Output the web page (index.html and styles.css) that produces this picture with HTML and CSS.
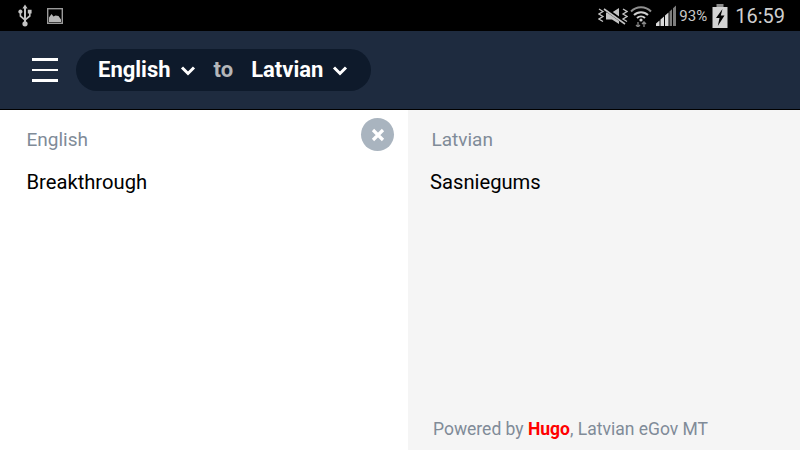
FILE: index.html
```html
<!DOCTYPE html>
<html lang="en">
<head>
    <meta charset="UTF-8">
    <meta name="viewport" content="width=device-width, initial-scale=1.0">
    <title>Hugo translate</title>
    <link rel="stylesheet" href="styles.css">
</head>
<body>

    <!-- status bar -->
    <div class="status-bar">
        <div class="status-left">
            <svg class="usb-icon" width="16" height="23" viewBox="0 0 16 23">
                <path d="M8 0.5 L10.6 4.5 H9 V14 L12 11.5 V9.5 H10.8 V5.8 H14.6 V9.5 H13.6 V12.4 L9 16.2 V19 H7 V16.2 L2.6 12.4 V9.6 A2.1 2.1 0 1 1 4.2 9.6 V11.5 L7 14 V4.5 H5.4 Z" fill="#c4c4c4"/>
                <circle cx="8" cy="19.8" r="2.6" fill="#c4c4c4"/>
            </svg>
            <svg class="pic-icon" width="16" height="16" viewBox="0 0 16 16">
                <rect x="0.7" y="0.7" width="14.6" height="14.6" fill="none" stroke="#9a9a9a" stroke-width="1.4"/>
                <path d="M2 14 V9.5 L4.5 6 L6.5 8.5 L8.5 7.6 L11.5 8 L14 11.5 V14 Z" fill="#b5b5b5"/>
            </svg>
        </div>
        <div class="status-right">
            <svg class="mute-icon" width="30" height="20" viewBox="0 0 30 20">
                <path d="M8 6.5 H14 L21 2 V18 L14 13.5 H8 Z" fill="#c4c4c4"/>
                <path d="M6 2 L27 17" stroke="#000" stroke-width="3.6"/>
                <path d="M6 3 L27 18" stroke="#c4c4c4" stroke-width="1.6"/>
                <path d="M1 3 L5 5.5 L1 8 L5 10.5 L1 13 L5 15.5 M25 3 L29 5.5 L25 8 L29 10.5 L25 13 L29 15.5" fill="none" stroke="#c4c4c4" stroke-width="1.3"/>
            </svg>
            <svg class="wifi-icon" width="22" height="22" viewBox="0 0 22 22">
                <path d="M1 6.5 A14 14 0 0 1 21 6.5" fill="none" stroke="#8f8f8f" stroke-width="2"/>
                <path d="M4 10 A10 10 0 0 1 18 10" fill="none" stroke="#d0d0d0" stroke-width="2"/>
                <path d="M7 13 A6 6 0 0 1 15 13" fill="none" stroke="#d0d0d0" stroke-width="2"/>
                <circle cx="11" cy="15" r="1.6" fill="#d0d0d0"/>
                <path d="M8 17 V22 M6 20 L8 22 L10 20" fill="none" stroke="#888" stroke-width="1.3"/>
                <path d="M14 22 V17 M12 19 L14 17 L16 19" fill="none" stroke="#888" stroke-width="1.3"/>
            </svg>
            <svg class="signal-icon" width="20" height="21" viewBox="0 0 20 21">
                <path d="M0 21 V18.5 L3.5 15.5 V21 Z M4.5 21 V14.5 L8 11.5 V21 Z M9 21 V10.5 L12.5 7.5 V21 Z" fill="#dadada"/>
                <path d="M13.5 21 V6.5 L16 4.2 V21 Z M17 21 V3.2 L20 0.5 V21 Z" fill="#7d7d7d"/>
            </svg>
            <span class="battery-pct">93%</span>
            <svg class="battery-icon" width="16" height="24" viewBox="0 0 16 24">
                <rect x="4.5" y="0" width="7" height="3" fill="#8a8a8a"/>
                <rect x="0.5" y="3" width="15" height="21" fill="#d2d2d2"/>
                <path d="M10.5 5 L4 14 H7.5 L5.8 22 L12.5 11.5 H8.8 Z" fill="#000"/>
            </svg>
            <span class="clock">16:59</span>
        </div>
    </div>

    <!-- header -->
    <header class="app-header">
        <button class="menu-btn" aria-label="Menu">
            <span></span><span></span><span></span>
        </button>
        <div class="lang-pill">
            <span class="lang-name">English</span>
            <svg class="chevron" width="16" height="11" viewBox="0 0 16 11"><path d="M2 2.5 L8 8.5 L14 2.5" fill="none" stroke="#fff" stroke-width="3"/></svg>
            <span class="lang-to">to</span>
            <span class="lang-name">Latvian</span>
            <svg class="chevron" width="16" height="11" viewBox="0 0 16 11"><path d="M2 2.5 L8 8.5 L14 2.5" fill="none" stroke="#fff" stroke-width="3"/></svg>
        </div>
    </header>

    <!-- translation panes -->
    <main class="panes">
        <section class="pane pane-source">
            <div class="pane-label">English</div>
            <div class="pane-text">Breakthrough</div>
            <button class="clear-btn" aria-label="Clear">
                <svg width="14" height="14" viewBox="0 0 14 14"><path d="M2 2 L12 12 M12 2 L2 12" stroke="#fff" stroke-width="3.2"/></svg>
            </button>
        </section>
        <section class="pane pane-target">
            <div class="pane-label target-label">Latvian</div>
            <div class="pane-text">Sasniegums</div>
            <div class="powered">Powered by <strong>Hugo</strong>, Latvian eGov MT</div>
        </section>
    </main>

</body>
</html>
```

FILE: styles.css
```css
html, body {
    height: 100%;
}

body {
    font-family: Roboto, Arial, sans-serif;
    margin: 0;
    padding: 0;
    width: 800px;
    height: 450px;
    overflow: hidden;
    display: flex;
    flex-direction: column;
    background-color: #fff;
}

/* status bar */
.status-bar {
    height: 31px;
    flex-shrink: 0;
    background-color: #000;
    display: flex;
    justify-content: space-between;
    align-items: center;
    padding: 0 15px 0 17px;
}

.status-left,
.status-right {
    display: flex;
    align-items: center;
}

.pic-icon {
    margin-left: 14px;
}

.wifi-icon {
    margin-left: 2px;
}

.signal-icon {
    margin-left: 4px;
}

.battery-pct {
    color: #c8c8c8;
    font-size: 15px;
    margin-left: 3px;
}

.battery-icon {
    margin-left: 5px;
}

.clock {
    color: #cfcfcf;
    font-size: 20px;
    margin-left: 7px;
}

/* header */
.app-header {
    height: 79px;
    box-sizing: border-box;
    flex-shrink: 0;
    background-color: #1e2b3f;
    border-bottom: 1px solid #000;
    display: flex;
    align-items: center;
    padding-left: 32px;
}

.menu-btn {
    width: 26px;
    padding: 0;
    border: none;
    background: none;
    display: flex;
    flex-direction: column;
    gap: 8px;
}

.menu-btn span {
    display: block;
    height: 2.5px;
    background-color: #fff;
}

.lang-pill {
    margin-left: 18px;
    height: 42px;
    width: 295px;
    box-sizing: border-box;
    padding: 0 0 2px 22px;
    border-radius: 21px;
    background-color: #0e1a2b;
    display: flex;
    align-items: center;
}

.lang-name {
    color: #fff;
    font-size: 22px;
    font-weight: 700;
}

.chevron {
    margin: 3px 0 0 9px;
}

.lang-to {
    color: #b4b6b9;
    font-size: 22px;
    font-weight: 700;
    margin: 0 18px 0 18px;
}

/* panes */
.panes {
    flex-grow: 1;
    display: flex;
}

.pane {
    position: relative;
    box-sizing: border-box;
    padding: 19px 0 0 26.5px;
}

.pane-source {
    width: 408px;
    background-color: #fff;
}

.pane-target {
    width: 392px;
    background-color: #f5f5f5;
    padding-left: 22px;
    display: flex;
    flex-direction: column;
}

.pane-label {
    color: #808b98;
    font-size: 19px;
    line-height: 22px;
}

.target-label {
    margin-left: 1.5px;
}

.pane-text {
    color: #000;
    font-size: 20.2px;
    line-height: 24px;
    margin-top: 19px;
}

.clear-btn {
    position: absolute;
    top: 8px;
    right: 14px;
    width: 33px;
    height: 33px;
    padding: 0;
    border: none;
    border-radius: 50%;
    background-color: #a9b4bf;
    display: flex;
    align-items: center;
    justify-content: center;
}

.powered {
    margin-top: auto;
    margin-left: 3px;
    padding-bottom: 10px;
    color: #808b98;
    font-size: 17.5px;
    line-height: 22px;
}

.powered strong {
    color: #f00;
}
```
